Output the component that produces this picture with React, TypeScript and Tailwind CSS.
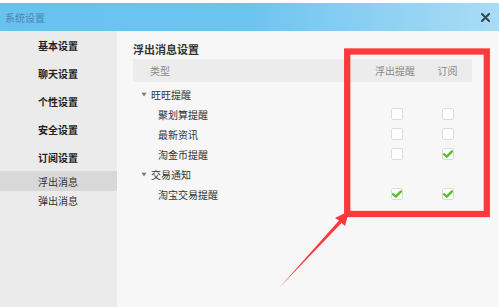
const MENU = [
  { label: "基本设置", bold: true },
  { label: "聊天设置", bold: true },
  { label: "个性设置", bold: true },
  { label: "安全设置", bold: true },
  { label: "订阅设置", bold: true },
  { label: "浮出消息", active: true },
  { label: "弹出消息" },
];

type Row = { label: string; group?: boolean; a?: boolean; b?: boolean };

const ROWS: Row[] = [
  { label: "旺旺提醒", group: true },
  { label: "聚划算提醒", a: false, b: false },
  { label: "最新资讯", a: false, b: false },
  { label: "淘金币提醒", a: false, b: true },
  { label: "交易通知", group: true },
  { label: "淘宝交易提醒", a: true, b: true },
];

function Check({ on }: { on?: boolean }) {
  return (
    <span className="flex h-[12px] w-[12px] items-center justify-center rounded-[2px] border border-[#dcdcdc] bg-white">
      {on && (
        <svg width="10" height="8" viewBox="0 0 10 8">
          <path d="M1 4.2 L3.8 6.6 L9 1.4" fill="none" stroke="#4cc21f" strokeWidth="2.2" strokeLinecap="round" strokeLinejoin="round" />
        </svg>
      )}
    </span>
  );
}

export default function App() {
  return (
    <div className="relative h-[307px] w-[499px] overflow-hidden bg-white font-['Noto_Sans_CJK_SC','Noto_Sans',sans-serif]">
      <div className="mt-[3px] flex h-[28px] items-center justify-between bg-gradient-to-r from-[#67c2ef] via-[#6cc4f0] to-[#a9dcf6] pl-[5px] pr-[9px]">
        <span className="text-[10px] text-[#4d87b0]">系统设置</span>
        <svg width="9" height="9" viewBox="0 0 9 9">
          <path d="M1 1 L8 8 M8 1 L1 8" stroke="#34444f" strokeWidth="2" strokeLinecap="round" />
        </svg>
      </div>

      <div className="flex h-[276px]">
        <nav className="w-[117px] bg-[#ebebeb]">
          {MENU.map((m) => (
            <div
              key={m.label}
              className={
                m.bold
                  ? "flex h-[28px] items-center pl-[38px] text-[10px] font-bold text-[#222]"
                  : m.active
                  ? "flex h-[20px] items-center bg-[#d8d8d8] pl-[38px] text-[10px] text-[#333]"
                  : "flex h-[19px] items-center pl-[38px] text-[10px] text-[#333]"
              }
            >
              {m.label}
            </div>
          ))}
        </nav>

        <main className="flex-1 bg-[#f7f7f7] pl-[16px] pr-[27px] pt-[9px]">
          <h2 className="flex h-[19px] items-center text-[11px] font-bold text-[#333]">浮出消息设置</h2>
          <div className="flex h-[23px] items-center bg-[#ececec] text-[10px] text-[#8a8a8a]">
            <span className="flex-1 pl-[17px]">类型</span>
            <span className="w-[52px] pr-[4px] text-center">浮出提醒</span>
            <span className="w-[49px] text-center">订阅</span>
          </div>
          <div className="mt-[2px]">
            {ROWS.map((r) => (
              <div key={r.label} className="flex h-[20px] items-center text-[10px] text-[#333]">
                {r.group ? (
                  <span className="flex flex-1 items-center pl-[8px]">
                    <svg width="6" height="5" viewBox="0 0 6 5" className="mr-[4px]">
                      <path d="M0.5 0.8 L5.5 0.8 L3 4.5 Z" fill="#777" />
                    </svg>
                    {r.label}
                  </span>
                ) : (
                  <>
                    <span className="flex-1 pl-[25px]">{r.label}</span>
                    <span className="flex w-[52px] justify-center">
                      <Check on={r.a} />
                    </span>
                    <span className="flex w-[49px] justify-center">
                      <Check on={r.b} />
                    </span>
                  </>
                )}
              </div>
            ))}
          </div>
        </main>
      </div>

      <svg className="pointer-events-none absolute left-0 top-0" width="499" height="307" viewBox="0 0 499 307">
        <rect x="347.2" y="51.5" width="139.6" height="162.5" fill="none" stroke="#fc3a3c" strokeWidth="6.3" />
        <polygon points="279,288 339,220.5 335,218 349,211 345,226 341.5,223" fill="#fc3a3c" />
      </svg>
    </div>
  );
}
